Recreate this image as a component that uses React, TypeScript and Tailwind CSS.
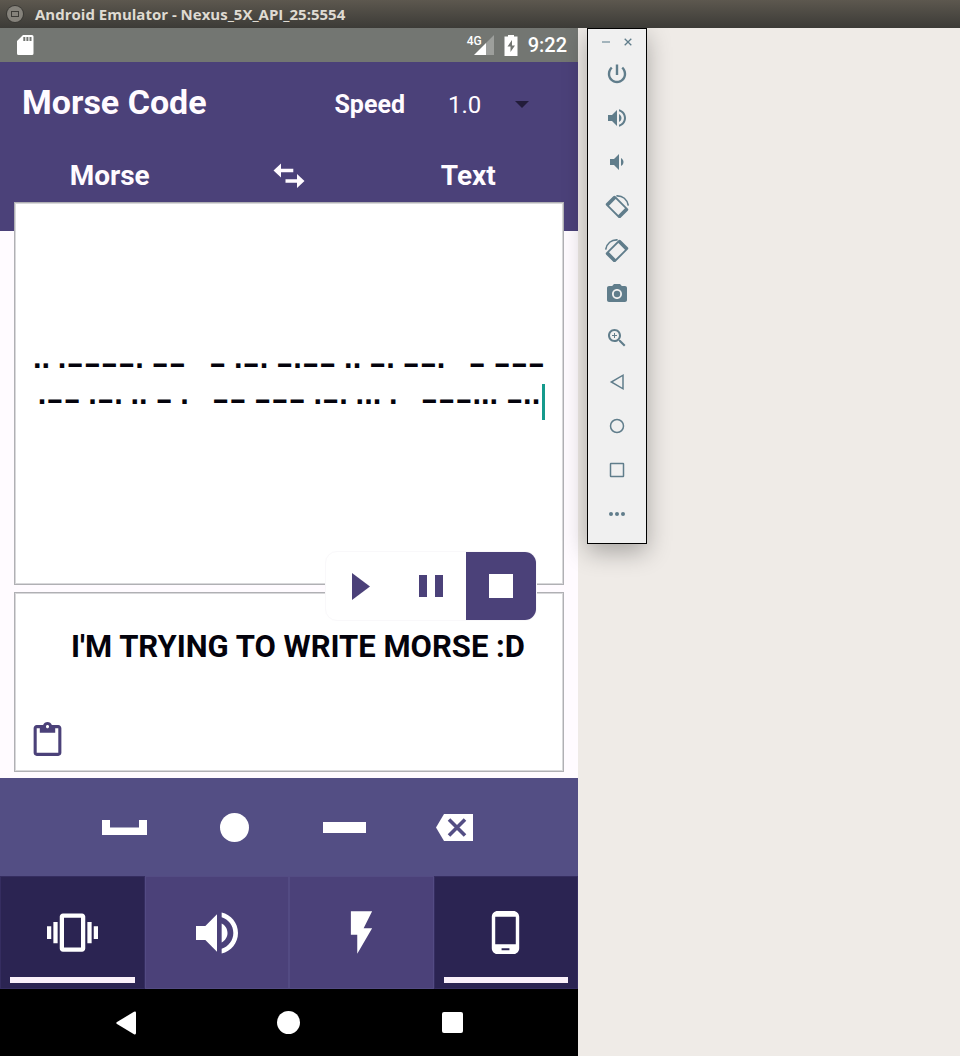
import React, { useState } from "react";

const MORSE_TEXT =
  "∙∙ ∙−−−−∙ −−   − ∙−∙ −∙−− ∙∙ −∙ −−∙   − −−−\n∙−− ∙−∙ ∙∙ − ∙   −− −−− ∙−∙ ∙∙∙ ∙   −−−∙∙∙ −∙∙";

type IconProps = { className?: string; children: React.ReactNode; box?: string };

function Icon({ className = "size-6", children, box = "0 0 24 24" }: IconProps) {
  return (
    <svg viewBox={box} className={className} fill="currentColor" aria-hidden="true">
      {children}
    </svg>
  );
}

const VOLUME_UP = (
  <path d="M3 9v6h4l5 5V4L7 9H3zm13.5 3c0-1.77-1.02-3.29-2.5-4.03v8.05c1.48-.73 2.5-2.25 2.5-4.02zM14 3.23v2.06c2.89.86 5 3.54 5 6.71s-2.11 5.85-5 6.71v2.06c4.01-.91 7-4.49 7-8.77s-2.99-7.86-7-8.77z" />
);

const ROTATE = (
  <>
    <path
      fillRule="evenodd"
      transform="translate(12 13) rotate(45)"
      d="M-8.6-6.6H8.6a1.6 1.6 0 0 1 1.6 1.6V5a1.6 1.6 0 0 1-1.6 1.6H-8.6A1.6 1.6 0 0 1-10.2 5V-5A1.6 1.6 0 0 1-8.6-6.6zM-6.6-4.7V4.7H6.6V-4.7z"
    />
    <path d="M11.4 1.9c6.2-.4 11 3.4 11.9 9.8" fill="none" stroke="currentColor" strokeWidth="1.6" />
  </>
);

const TOOLS: { label: string; art: React.ReactNode; flip?: boolean }[] = [
  {
    label: "Power",
    art: (
      <path d="M13.2 2.5h-2.4v10.5h2.4V2.5zm4.83 2.37l-1.62 1.62C17.99 7.76 18.8 9.81 18.8 12c0 3.8-3.06 6.8-6.8 6.8s-6.8-3-6.8-6.8c0-2.19.81-4.24 2.4-5.51L5.97 4.87C4.03 6.62 2.8 9.16 2.8 12c0 5.07 4.13 9.2 9.2 9.2s9.2-4.13 9.2-9.2c0-2.84-1.23-5.38-3.17-7.13z" />
    ),
  },
  { label: "Volume up", art: VOLUME_UP },
  {
    label: "Volume down",
    art: (
      <path d="M18.5 12c0-1.77-1.02-3.29-2.5-4.03v8.05c1.48-.73 2.5-2.25 2.5-4.02zM5 9v6h4l5 5V4L9 9H5z" />
    ),
  },
  { label: "Rotate left", art: ROTATE },
  { label: "Rotate right", art: ROTATE, flip: true },
  {
    label: "Take screenshot",
    art: (
      <>
        <circle cx="12" cy="12" r="3.2" />
        <path d="M9 2L7.17 4H4c-1.1 0-2 .9-2 2v12c0 1.1.9 2 2 2h16c1.1 0 2-.9 2-2V6c0-1.1-.9-2-2-2h-3.17L15 2H9zm3 15c-2.76 0-5-2.24-5-5s2.24-5 5-5 5 2.24 5 5-2.24 5-5 5z" />
      </>
    ),
  },
  {
    label: "Zoom",
    art: (
      <path d="M15.5 14h-.79l-.28-.27C15.41 12.59 16 11.11 16 9.5 16 5.91 13.09 3 9.5 3S3 5.91 3 9.5 5.91 16 9.5 16c1.61 0 3.09-.59 4.23-1.57l.27.28v.79l5 4.99L20.49 19l-4.99-5zm-6 0C7.01 14 5 11.99 5 9.5S7.01 5 9.5 5 14 7.01 14 9.5 11.99 14 9.5 14zM12 10h-2v2H9v-2H7V9h2V7h1v2h2v1z" />
    ),
  },
  {
    label: "Back",
    art: <path d="M18 5.2v13.6L6.3 12z" fill="none" stroke="currentColor" strokeWidth="1.5" />,
  },
  {
    label: "Home",
    art: <circle cx="12" cy="12" r="6.5" fill="none" stroke="currentColor" strokeWidth="1.5" />,
  },
  {
    label: "Overview",
    art: (
      <rect x="5.5" y="5.5" width="13" height="13" rx="0.5" fill="none" stroke="currentColor" strokeWidth="1.5" />
    ),
  },
  {
    label: "More",
    art: (
      <>
        <circle cx="6" cy="12" r="2" />
        <circle cx="12" cy="12" r="2" />
        <circle cx="18" cy="12" r="2" />
      </>
    ),
  },
];

function TitleBar() {
  return (
    <header className="relative z-10 flex h-7 items-center gap-3 bg-linear-to-b from-[#5d584f] to-[#3c3b37] pl-[7px]">
      <button
        aria-label="Window menu"
        className="flex size-4 items-center justify-center rounded-full bg-[#85827b] text-[#3c3b37] ring-1 ring-[#3a3935]"
      >
        <svg viewBox="0 0 8 6" className="h-[6px] w-2" aria-hidden="true">
          <rect x="0.5" y="0.5" width="7" height="5" fill="none" stroke="currentColor" />
        </svg>
      </button>
      <h1 className="font-['Open_Sans','Noto_Sans',sans-serif] text-[15px] font-bold text-[#dfdbd2]">
        Android Emulator - Nexus_5X_API_25:5554
      </h1>
    </header>
  );
}

function StatusBar() {
  return (
    <div className="flex h-[34px] items-center justify-between bg-[#737672] pr-[11px] pl-4 text-white">
      <Icon className="h-[22px] w-[18px]" box="0 0 18 22">
        <path
          fillRule="evenodd"
          d="M7 1h9a1.5 1.5 0 0 1 1.5 1.5v17A1.5 1.5 0 0 1 16 21H2.5A1.5 1.5 0 0 1 1 19.5V7zM7.3 3v4h2V3zm3.1 0v4h2V3zm3.1 0v4h2V3z"
        />
      </Icon>
      <div className="flex items-center gap-[10px]">
        <div className="flex items-center">
          <span className="-mr-2 self-start text-[12px] leading-3 font-medium">4G</span>
          <Icon className="size-5" box="0 0 20 20">
            <path d="M20 0v20H12V8z" opacity="0.3" />
            <path d="M12 8v12H0z" />
          </Icon>
        </div>
        <Icon className="h-[21px] w-[14px]" box="0 0 14 21">
          <path fillRule="evenodd" d="M4 0h6v1.5h3.5V21H.5V1.5H4zM8 5l-4.5 6.5h3V17l4.5-6.5H8z" />
        </Icon>
        <span className="text-[20px] font-medium">9:22</span>
      </div>
    </div>
  );
}

function AppHeader() {
  const [speed, setSpeed] = useState("1.0");
  return (
    <div className="bg-[#4b4179] text-[#fffbff]">
      <div className="flex h-[84px] items-center justify-between pr-[49px] pl-[22px]">
        <h2 className="pb-[3px] text-[34px] font-bold">Morse Code</h2>
        <div className="flex items-center pt-px text-[24px]">
          <label htmlFor="speed" className="text-[25px] font-bold">
            Speed
          </label>
          <div className="relative ml-[42px] flex items-center">
            <select
              id="speed"
              value={speed}
              onChange={(e) => setSpeed(e.target.value)}
              className="w-[82px] appearance-none bg-transparent pl-px"
            >
              <option>0.5</option>
              <option>1.0</option>
              <option>1.5</option>
            </select>
            <svg viewBox="0 0 14 7" className="pointer-events-none absolute right-0 h-[7px] w-[14px]" aria-hidden="true">
              <path d="M0 0h14L7 7z" fill="#221c3a" />
            </svg>
          </div>
        </div>
      </div>
      <div className="grid h-14 grid-cols-3 items-center px-5 pt-1 text-center text-[28px] font-bold">
        <span>Morse</span>
        <button aria-label="Swap direction" className="justify-self-center">
          <Icon className="h-[26px] w-8" box="0 0 32 26">
            <path d="M.5 7.5L8 .5v5.200h12.300v3.600H8v5.200zM31.500 18L24 11v5.200H12.500v3.600H24V25z" />
          </Icon>
        </button>
        <span>Text</span>
      </div>
    </div>
  );
}

function Player() {
  return (
    <div className="absolute -top-[42px] right-[26px] grid h-[70px] w-[212px] grid-cols-3 overflow-hidden rounded-xl border border-[#f9f8fa] bg-white text-[#4b4179]">
      <button aria-label="Play" className="flex items-center justify-center">
        <Icon className="h-[27px] w-[18px]" box="0 0 18 27">
          <path d="M0 0l18 13.500L0 27z" />
        </Icon>
      </button>
      <button aria-label="Pause" className="flex items-center justify-center gap-2">
        <span className="h-[22px] w-2 bg-[#4b4179]" />
        <span className="h-[22px] w-2 bg-[#4b4179]" />
      </button>
      <button aria-label="Stop" className="flex items-center justify-center bg-[#4b4179]">
        <span className="size-6 bg-white" />
      </button>
    </div>
  );
}

const PANEL = "relative border border-[#b0b0b4] bg-white shadow-[inset_0_0_0_1px_#d8d8da]";

function Panels() {
  const [morse, setMorse] = useState(MORSE_TEXT);
  return (
    <div className="flex grow flex-col gap-[7px] bg-[linear-gradient(#4b4179_29px,#fffbff_29px)] px-[14px] pb-[6px]">
      <div className={PANEL + " flex grow items-center justify-center pb-5"}>
        <div className="relative">
          <textarea
            aria-label="Morse"
            rows={2}
            cols={46}
            value={morse}
            onChange={(e) => setMorse(e.target.value)}
            className="block w-[520px] resize-none overflow-hidden bg-transparent text-center text-[31px] leading-9 font-bold whitespace-pre text-[#04030c] outline-none"
          />
          <span className="absolute right-1 bottom-0 h-9 w-[3px] bg-[#159a8c]" />
        </div>
      </div>
      <div className={PANEL + " flex h-[180px] flex-col justify-between pt-[34px] pr-4 pb-3 pl-[14px]"}>
        <Player />
        <output className="pl-5 text-center text-[31px] leading-10 font-bold whitespace-nowrap text-[#04030c]">
          I'M TRYING TO WRITE MORSE :D
        </output>
        <button aria-label="Paste" className="self-start text-[#4b4179]">
          <Icon className="size-[37px]">
            <path d="M19 2h-4.180C14.400.840 13.300 0 12 0c-1.300 0-2.400.840-2.820 2H5c-1.100 0-2 .9-2 2v16c0 1.100.9 2 2 2h14c1.100 0 2-.9 2-2V4c0-1.100-.9-2-2-2zm-7 0c.55 0 1 .45 1 1s-.45 1-1 1-1-.45-1-1 .45-1 1-1zm7 18H5V4h2v3h10V4h2v16z" />
          </Icon>
        </button>
      </div>
    </div>
  );
}

function MorseKeys() {
  return (
    <div className="grid h-[98px] grid-cols-4 bg-[#534e84] px-[69px] text-white">
      <button aria-label="Space" className="flex items-center justify-center">
        <Icon className="h-[15px] w-[45px]" box="0 0 45 15">
          <path d="M0 0h8v7.500h29V0h8v15H0z" />
        </Icon>
      </button>
      <button aria-label="Dot" className="flex items-center justify-center">
        <span className="size-[29px] rounded-full bg-white" />
      </button>
      <button aria-label="Dash" className="flex items-center justify-center">
        <span className="h-[11px] w-[43px] bg-white" />
      </button>
      <button aria-label="Delete" className="flex items-center justify-center">
        <svg viewBox="0 0 37 27" className="h-[27px] w-[37px]" aria-hidden="true">
          <path d="M0 13.500L8 0h29v27H8z" fill="#fff" />
          <path d="M13 5.500l16 16M29 5.500l-16 16" stroke="#534e84" strokeWidth="3.600" />
        </svg>
      </button>
    </div>
  );
}

function Modes() {
  const modes = [
    {
      label: "Vibration",
      on: true,
      art: (
        <Icon className="size-[51px]">
          <path d="M0 15h2V9H0v6zm3 2h2V7H3v10zm19-8v6h2V9h-2zm-3 8h2V7h-2v10zM16.5 3h-9C6.67 3 6 3.67 6 4.5v15c0 .83.67 1.5 1.5 1.5h9c.83 0 1.5-.67 1.5-1.5v-15c0-.83-.67-1.5-1.5-1.5zM16 19H8V5h8v14z" />
        </Icon>
      ),
    },
    { label: "Sound", on: false, art: <Icon className="size-[56px]">{VOLUME_UP}</Icon> },
    {
      label: "Flash",
      on: false,
      art: (
        <Icon className="size-[51px]">
          <path d="M7 2v11h3v9l7-12h-4l4-8z" />
        </Icon>
      ),
    },
    {
      label: "Screen",
      on: true,
      art: (
        <Icon className="size-[47px]">
          <path d="M16 1H8C6.34 1 5 2.34 5 4v16c0 1.66 1.34 3 3 3h8c1.66 0 3-1.34 3-3V4c0-1.66-1.34-3-3-3zm-2 20h-4v-1h4v1zm3.25-3H6.75V4h10.5v14z" />
        </Icon>
      ),
    },
  ];
  return (
    <div className="grid h-[113px] grid-cols-4 text-white">
      {modes.map((m) => (
        <button
          key={m.label}
          aria-label={m.label}
          aria-pressed={m.on}
          className={
            "relative flex items-center justify-center border " +
            (m.on ? "border-[#352d60] bg-[#2b2452]" : "border-[#534b83] bg-[#4b4179]")
          }
        >
          {m.art}
          {m.on && <span className="absolute inset-x-[9px] bottom-[5px] h-[6px] bg-[#faf1fa]" />}
        </button>
      ))}
    </div>
  );
}

function NavBar() {
  return (
    <nav className="grid h-[67px] grid-cols-3 bg-black px-11 text-white">
      <button aria-label="Back" className="flex items-center justify-center">
        <Icon className="h-6 w-5" box="0 0 20 24">
          <path d="M1 11L18 .8Q20 0 20 2v20q0 2-2 1.200L1 13Q-.5 12 1 11z" />
        </Icon>
      </button>
      <button aria-label="Home" className="flex items-center justify-center">
        <span className="size-[23px] rounded-full bg-white" />
      </button>
      <button aria-label="Recent apps" className="flex items-center justify-center">
        <span className="size-[21px] rounded-[2px] bg-white" />
      </button>
    </nav>
  );
}

function EmulatorToolbar() {
  return (
    <aside className="relative ml-[9px] flex w-[60px] flex-col self-start border border-black bg-[#f0f0f0] pb-[7px] text-[#607d8b] shadow-[0_8px_24px_rgba(0,0,0,0.3)]">
      <div className="flex h-[23px] items-center justify-center gap-3 pt-[2px]">
        <button aria-label="Minimize" className="flex size-[10px] items-center justify-center">
          <span className="h-[2px] w-2 bg-[#a3b4bc]" />
        </button>
        <button aria-label="Close" className="flex size-[10px] items-center justify-center">
          <svg viewBox="0 0 8 8" className="size-2" aria-hidden="true">
            <path d="M.7.7l6.600 6.600M7.300.7L.7 7.300" stroke="currentColor" strokeWidth="1.300" />
          </svg>
        </button>
      </div>
      {TOOLS.map((t) => (
        <button key={t.label} aria-label={t.label} className="flex h-11 items-center justify-center">
          <Icon className={t.flip ? "size-6 -scale-x-100" : "size-6"}>{t.art}</Icon>
        </button>
      ))}
    </aside>
  );
}

export default function App() {
  return (
    <div className="flex min-h-screen flex-col bg-[#efebe7] font-['Roboto',sans-serif]">
      <TitleBar />
      <div className="flex grow">
        <main className="flex min-w-0 flex-[578] flex-col">
          <StatusBar />
          <AppHeader />
          <Panels />
          <MorseKeys />
          <Modes />
          <NavBar />
        </main>
        <div className="flex min-w-0 flex-[382]">
          <EmulatorToolbar />
        </div>
      </div>
    </div>
  );
}
